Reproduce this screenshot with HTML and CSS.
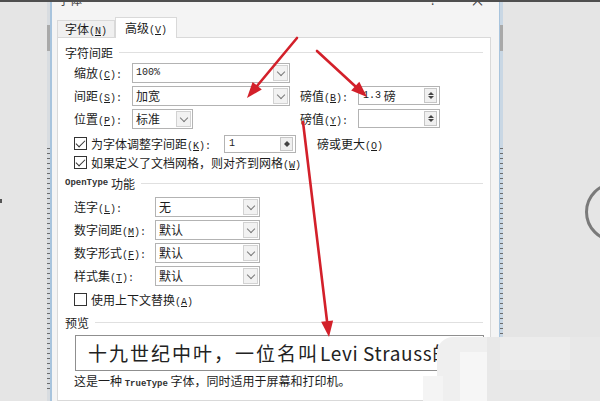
FILE: index.html
```html
<!DOCTYPE html>
<html lang="zh-CN">
<head>
    <meta charset="UTF-8">
    <meta name="viewport" content="width=device-width, initial-scale=1.0">
    <title>字体 - 高级</title>
    <link rel="stylesheet" href="styles.css">
</head>
<body>

    <div class="screen">
        <div class="gutter">
            <span class="dot"></span>
            <div class="ruler"></div>
        </div>

        <div class="dialog">
            <div class="titlebar">
                <span class="title">字体</span>
                <span class="help">?</span>
                <span class="close">×</span>
            </div>

            <div class="tabs">
                <div class="tab">字体<span class="key">(<u>N</u>)</span></div>
                <div class="tab active">高级<span class="key">(<u>V</u>)</span></div>
            </div>

            <div class="panel">
                <div class="group-head">字符间距</div>

                <div class="row">
                    <label class="lbl">缩放<span class="key">(<u>C</u>):</span></label>
                    <div class="combo w-long"><span class="mono">100%</span><i class="drop"></i></div>
                </div>
                <div class="row">
                    <label class="lbl">间距<span class="key">(<u>S</u>):</span></label>
                    <div class="combo w-long">加宽<i class="drop"></i></div>
                    <label class="lbl side">磅值<span class="key">(<u>B</u>):</span></label>
                    <div class="spin"><span class="mono">1.3</span>&nbsp;磅<i class="arrows"></i></div>
                </div>
                <div class="row">
                    <label class="lbl">位置<span class="key">(<u>P</u>):</span></label>
                    <div class="combo w-short">标准<i class="drop"></i></div>
                    <label class="lbl side far">磅值<span class="key">(<u>Y</u>):</span></label>
                    <div class="spin"><i class="arrows"></i></div>
                </div>

                <div class="check first">
                    <span class="box on"></span>
                    <span class="kern-text">为字体调整字间距<span class="key">(<u>K</u>):</span></span>
                    <div class="spin small"><span class="mono">1</span><i class="arrows"></i></div>
                    <span class="after">磅或更大<span class="key">(<u>O</u>)</span></span>
                </div>
                <div class="check">
                    <span class="box on"></span>
                    <span>如果定义了文档网格，则对齐到网格<span class="key">(<u>W</u>)</span></span>
                </div>

                <div class="group-head second"><span class="mono tiny">OpenType</span>&nbsp;功能</div>

                <div class="row">
                    <label class="lbl wide">连字<span class="key">(<u>L</u>):</span></label>
                    <div class="combo w-mid">无<i class="drop"></i></div>
                </div>
                <div class="row">
                    <label class="lbl wide">数字间距<span class="key">(<u>M</u>):</span></label>
                    <div class="combo w-mid">默认<i class="drop"></i></div>
                </div>
                <div class="row">
                    <label class="lbl wide">数字形式<span class="key">(<u>F</u>):</span></label>
                    <div class="combo w-mid">默认<i class="drop"></i></div>
                </div>
                <div class="row">
                    <label class="lbl wide">样式集<span class="key">(<u>T</u>):</span></label>
                    <div class="combo w-mid">默认<i class="drop"></i></div>
                </div>

                <div class="check third">
                    <span class="box"></span>
                    <span>使用上下文替换<span class="key">(<u>A</u>)</span></span>
                </div>

                <div class="group-head third">预览</div>

                <div class="preview">十九世纪中叶，一位名叫<span class="latin">Levi Strauss</span>的美国人</div>
                <div class="caption">这是一种 <span class="mono tiny">TrueType</span> 字体，同时适用于屏幕和打印机。</div>
            </div>
        </div>

        <div class="backdrop">
            <div class="ruler right"></div>
            <span class="ring"></span>
        </div>
    </div>

    <!-- red annotation arrows -->
    <svg class="marks" width="600" height="401" viewBox="0 0 600 401">
        <g stroke="#d3202a" stroke-width="2.6" stroke-linecap="round">
            <line x1="297" y1="38" x2="257" y2="86"/>
            <line x1="317" y1="51" x2="355" y2="86"/>
            <line x1="303" y1="122" x2="327" y2="321"/>
        </g>
        <g fill="#d3202a">
            <polygon points="247,98 261.8,89.5 252.6,81.9"/>
            <polygon points="367,97 351.2,90.6 359.3,81.7"/>
            <polygon points="329,337 321.1,321.8 333.1,320.4"/>
        </g>
    </svg>

    <!-- blurred watermark in the corner -->
    <div class="mosaic">
        <span class="m m1"></span>
        <span class="m m2"></span>
        <span class="m m3"></span>
        <span class="m m4"></span>
        <span class="m m5"></span>
    </div>

</body>
</html>
```

FILE: styles.css
```css
* {
    box-sizing: border-box;
}
body {
    margin: 0;
    width: 600px;
    height: 401px;
    overflow: hidden;
    background: #e5e5e5;
    font-family: "Noto Sans CJK SC", "Noto Sans", sans-serif;
    font-size: 12px;
    color: #1c1c1c;
}
u {
    text-decoration: underline;
    text-underline-offset: 1px;
}
.key, .mono {
    font-family: "Liberation Mono", monospace;
    font-size: 10px;
}
.tiny {
    font-size: 9px;
    font-weight: bold;
    color: #333;
}

.screen {
    position: relative;
    display: flex;
    height: 401px;
    border-top: 2px solid #4f4f4f;
}

/* left strip of the word window */
.gutter {
    position: relative;
    width: 50px;
    display: flex;
    justify-content: flex-end;
}
.dot {
    position: absolute;
    left: 0;
    top: 197px;
    width: 2px;
    height: 4px;
    background: #555;
}
.ruler {
    position: relative;
    width: 3px;
    background: #d8dce0;
}
.ruler::before {
    content: "";
    position: absolute;
    left: 0;
    right: 0;
    top: 23px;
    height: 26px;
    background: #a9a9a9;
}
.ruler::after {
    content: "";
    position: absolute;
    left: 0;
    right: 0;
    top: 146px;
    height: 244px;
    background: repeating-linear-gradient(to bottom, #6b6b6b 0 1px, transparent 1px 5px);
}

/* dialog */
.dialog {
    width: 450px;
    display: flex;
    flex-direction: column;
    background: #f4f4f4;
    border-left: 2px solid #a8c4dd;
    border-right: 1px solid #a8c4dd;
}
.titlebar {
    position: relative;
    height: 15px;
    overflow: hidden;
}
.titlebar span {
    position: absolute;
    top: -9px;
    line-height: 14px;
    color: #444;
}
.title {
    left: 6px;
}
.help {
    left: 378px;
}
.close {
    left: 418px;
    font-size: 15px;
}

.tabs {
    display: flex;
    align-items: flex-end;
    height: 21px;
    margin: 0 0 -1px 5px;
}
.tab {
    width: 58px;
    height: 18px;
    line-height: 16px;
    text-align: center;
    background: #f0f0f0;
    border: 1px solid #d9d9d9;
    border-bottom: none;
}
.tab.active {
    position: relative;
    z-index: 1;
    width: 62px;
    height: 21px;
    line-height: 19px;
    background: #fff;
}

.panel {
    flex: 1;
    margin: 0 8px 0 5px;
    padding: 6px 7px 0;
    background: #fff;
    border: 1px solid #d9d9d9;
}

.group-head {
    display: flex;
    align-items: center;
    height: 17px;
}
.group-head::after {
    content: "";
    flex: 1;
    margin-left: 6px;
    border-top: 1px solid #e0e0e0;
}
.group-head.second {
    height: 18px;
    margin-top: 2px;
}
.group-head.third {
    height: 16px;
    margin-top: 5px;
}

.row {
    display: flex;
    align-items: center;
    height: 23px;
    margin-left: 9px;
}
.group-head.second + .row {
    margin-top: 3px;
}
.lbl {
    width: 58px;
}
.lbl.wide {
    width: 81px;
}
.lbl.side {
    margin-left: 10px;
}
.lbl.far {
    margin-left: 107px;
}

.combo {
    position: relative;
    display: flex;
    align-items: center;
    height: 20px;
    padding-left: 3px;
    background: #fff;
    border: 1px solid #b3b3b3;
}
.w-long {
    width: 158px;
}
.w-short {
    width: 61px;
}
.w-mid {
    width: 105px;
}
.drop {
    position: absolute;
    top: 1px;
    right: 1px;
    bottom: 1px;
    width: 15px;
    background: #f2f2f2;
    border: 1px solid #d2d2d2;
}
.drop::after {
    content: "";
    position: absolute;
    left: 4px;
    top: 3px;
    width: 5px;
    height: 5px;
    border-right: 1px solid #7a7a7a;
    border-bottom: 1px solid #7a7a7a;
    transform: rotate(45deg);
}

.spin {
    position: relative;
    display: flex;
    align-items: center;
    width: 82px;
    height: 19px;
    padding-left: 4px;
    background: #fff;
    border: 1px solid #b3b3b3;
}
.spin.small {
    width: 72px;
    height: 18px;
}
.arrows {
    position: absolute;
    top: 1px;
    right: 2px;
    bottom: 1px;
    width: 13px;
    background: #f0f0f0;
    border: 1px solid #c6c6c6;
}
.arrows::before, .arrows::after {
    content: "";
    position: absolute;
    left: 3px;
    border-left: 3px solid transparent;
    border-right: 3px solid transparent;
}
.arrows::before {
    top: 3px;
    border-bottom: 3px solid #444;
}
.arrows::after {
    bottom: 3px;
    border-top: 3px solid #444;
}

.check {
    display: flex;
    align-items: center;
    height: 19px;
    margin-left: 9px;
}
.check.first {
    margin-top: 4px;
}
.check.third {
    margin-top: 3px;
}
.box {
    position: relative;
    width: 13px;
    height: 13px;
    margin-right: 4px;
    background: #fff;
    border: 1px solid #333;
}
.box.on::after {
    content: "";
    position: absolute;
    left: 3px;
    top: 0;
    width: 4px;
    height: 8px;
    border-right: 1.5px solid #333;
    border-bottom: 1.5px solid #333;
    transform: rotate(45deg);
}
.kern-text {
    width: 133px;
}
.after {
    margin-left: 21px;
}

.preview {
    width: 409px;
    height: 36px;
    margin: 5px 0 0 10px;
    padding-left: 12px;
    overflow: hidden;
    white-space: nowrap;
    font-size: 19px;
    line-height: 33px;
    letter-spacing: 2px;
    color: #222;
    border: 1px solid #8f8f8f;
}
.latin {
    letter-spacing: 0.6px;
    margin-left: 1px;
}
.caption {
    height: 16px;
    margin: 2px 0 0 9px;
    line-height: 16px;
}

/* right side of the word window */
.backdrop {
    position: relative;
    flex: 1;
    overflow: hidden;
}
.ruler.right {
    height: 100%;
    background: #c9d7e4;
}
.ring {
    position: absolute;
    left: 85px;
    top: 180px;
    width: 60px;
    height: 60px;
    border: 3px solid #7a7a7a;
    border-radius: 50%;
}

.marks {
    position: absolute;
    top: 0;
    left: 0;
}

.mosaic .m {
    position: absolute;
}
.m1 {
    left: 437px;
    top: 337px;
    width: 50px;
    height: 64px;
    background: #efefef;
    border-top-left-radius: 16px;
}
.m2 {
    left: 423px;
    top: 376px;
    width: 20px;
    height: 25px;
    background: #f4f4f4;
}
.m3 {
    left: 487px;
    top: 337px;
    width: 113px;
    height: 64px;
    background: #e8e8e8;
}
.m4 {
    left: 500px;
    top: 337px;
    width: 70px;
    height: 33px;
    background: #ececec;
}
.m5 {
    left: 460px;
    top: 352px;
    width: 27px;
    height: 49px;
    background: #f6f6f6;
}
```
